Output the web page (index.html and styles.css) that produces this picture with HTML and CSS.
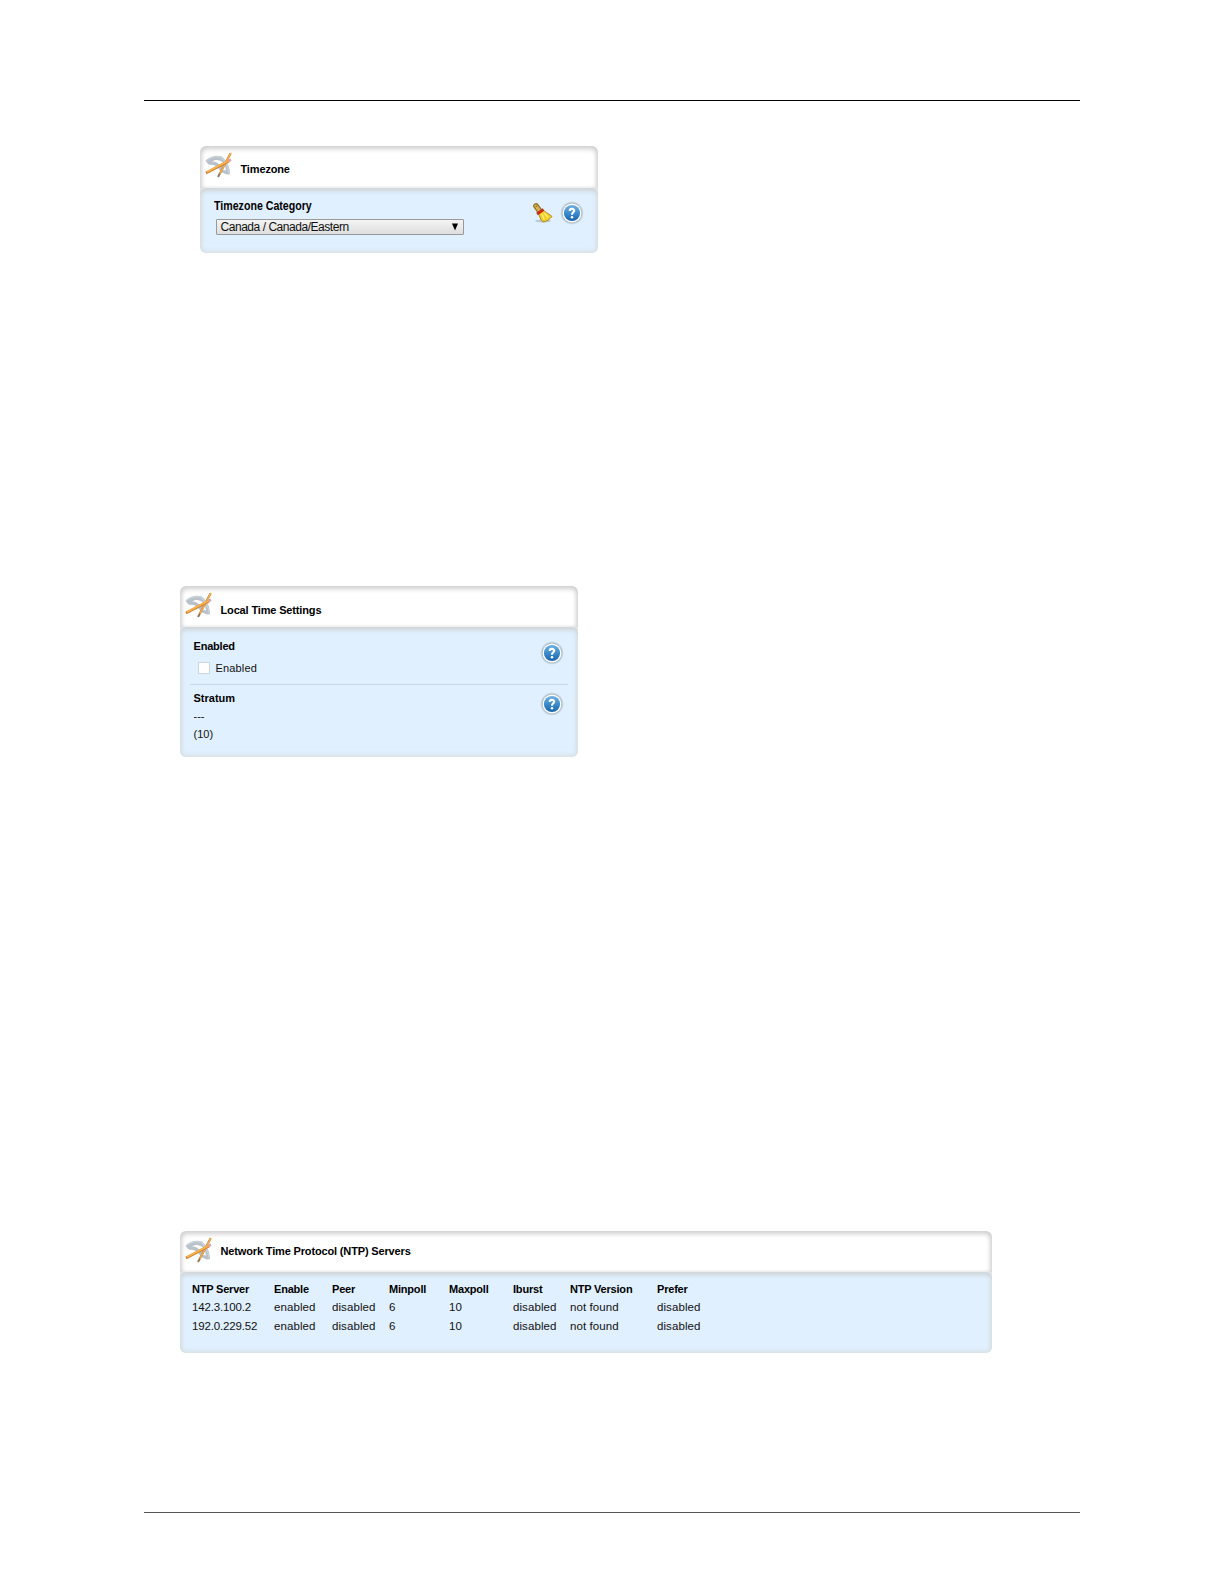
FILE: index.html
```html
<!DOCTYPE html>

<html lang="en">

	<head>

		<meta charset="utf-8">

		<title>Time Settings</title>

		<link rel="stylesheet" href="styles.css">

	</head>

	<body>

		<!-- shared icons -->
		<svg class="defs" width="0" height="0">
			<defs>
				<linearGradient id="blue" x1="0" y1="0" x2="0" y2="1">
					<stop offset="0" stop-color="#72b2e2"/>
					<stop offset="0.5" stop-color="#3d8ccb"/>
					<stop offset="1" stop-color="#1763ad"/>
				</linearGradient>
				<radialGradient id="halo">
					<stop offset="0.76" stop-color="#8d9aa6" stop-opacity="0.9"/>
					<stop offset="1" stop-color="#b5c3ce" stop-opacity="0"/>
				</radialGradient>
				<symbol id="tools" viewBox="0 0 27 27">
					<path fill-rule="evenodd" d="M0.5 8.5C5 4 12 2.500 17 4.500C22 9 25 15 25 22C22 23.500 19 21 16 20C14 16 9 12 5 13C3 12 1.500 10.500 0.500 8.500ZM7 9.500C10 9 13 11 14.500 13L18 10.500C15 7.500 10 7 7 9.500ZM17 17.500L21 18.500L20 13.500Z" fill="#b9c2cb"/>
					<path d="M1.500 8.500C6 5 12 4 16.500 5.500C21 10 23.500 15 24 21" fill="none" stroke="#ccd4db" stroke-width="1.2"/>
					<path d="M25.500 1.500L13 25" stroke="#94785a" stroke-width="2"/>
					<path d="M26 1L15 21.500" stroke="#f2ab4b" stroke-width="1.700"/>
					<path d="M24 9L1 21" stroke="#cd8237" stroke-width="2.600"/>
					<path d="M24 8.500L2 20" stroke="#fbb54c" stroke-width="1.600"/>
					<path d="M23.500 9L26 7.700" stroke="#dfa0a8" stroke-width="2.600"/>
				</symbol>
				<symbol id="help" viewBox="0 0 24 24">
					<circle cx="12" cy="12" r="12" fill="url(#halo)"/>
					<circle cx="12" cy="12" r="9.5" fill="#fff"/>
					<circle cx="12" cy="12" r="8.100" fill="url(#blue)"/>
					<path d="M9.700 10C9.700 7.200 14.300 7.300 14.200 9.700C14.200 11.300 12 11.500 12 13.700" fill="none" stroke="#fff" stroke-width="2.100"/>
					<circle cx="12" cy="16.200" r="1.250" fill="#fff"/>
				</symbol>
				<symbol id="broom" viewBox="0 0 22 22">
					<ellipse cx="11" cy="19" rx="8" ry="1.500" fill="#a9b6bd" opacity="0.700"/>
					<path d="M4 4L7 8" stroke="#8b6a22" stroke-width="5.500" stroke-linecap="round"/>
					<path d="M4 4L7 8" stroke="#d9b04f" stroke-width="3.500" stroke-linecap="round"/>
					<path d="M3.500 5L5.500 3.500" stroke="#8b6a22"/>
					<path d="M6 11L11.500 8C13 10.500 17.500 12 20 14.500C18 17 15 19.500 11 20C8 17.500 8 14 6 11Z" fill="#f3cf27" stroke="#a98224" stroke-width="0.900"/>
					<path d="M10 12L12 17.500M12.500 11L16 15.500" stroke="#fff079" stroke-width="1.300"/>
					<path d="M5 12L11.500 7.500" stroke="#c52d19" stroke-width="2.800"/>
				</symbol>
			</defs>
		</svg>

		<div class="page">

			<div class="panel timezone">
				<div class="head">
					<svg class="tools"><use href="#tools"/></svg>
					<h2>Timezone</h2>
				</div>
				<div class="content">
					<div class="field">
						<h3>Timezone Category</h3>
						<div class="select"><span>Canada / Canada/Eastern</span><svg class="arrow" viewBox="0 0 6 8"><path d="M0 0.5H6L3 7.5Z"/></svg></div>
					</div>
					<div class="actions">
						<svg class="broom"><use href="#broom"/></svg>
						<svg class="help"><use href="#help"/></svg>
					</div>
				</div>
			</div>

			<div class="panel local">
				<div class="head">
					<svg class="tools"><use href="#tools"/></svg>
					<h2>Local Time Settings</h2>
				</div>
				<div class="content">
					<div class="row enabled">
						<div>
							<h3>Enabled</h3>
							<label><span class="box"></span>Enabled</label>
						</div>
						<svg class="help"><use href="#help"/></svg>
					</div>
					<div class="row stratum">
						<div>
							<h3>Stratum</h3>
							<p>---</p>
							<p>(10)</p>
						</div>
						<svg class="help"><use href="#help"/></svg>
					</div>
				</div>
			</div>

			<div class="panel servers">
				<div class="head">
					<svg class="tools"><use href="#tools"/></svg>
					<h2>Network Time Protocol (NTP) Servers</h2>
				</div>
				<div class="content">
					<table>
						<colgroup><col class="c1"><col class="c2"><col class="c3"><col class="c4"><col class="c5"><col class="c6"><col class="c7"><col class="c8"></colgroup>
						<thead>
							<tr>
								<th>NTP Server</th>
								<th>Enable</th>
								<th>Peer</th>
								<th>Minpoll</th>
								<th>Maxpoll</th>
								<th>Iburst</th>
								<th>NTP Version</th>
								<th>Prefer</th>
							</tr>
						</thead>
						<tbody>
							<tr>
								<td class="ip">142.3.100.2</td>
								<td>enabled</td>
								<td>disabled</td>
								<td>6</td>
								<td>10</td>
								<td>disabled</td>
								<td>not found</td>
								<td>disabled</td>
							</tr>
							<tr>
								<td class="ip">192.0.229.52</td>
								<td>enabled</td>
								<td>disabled</td>
								<td>6</td>
								<td>10</td>
								<td>disabled</td>
								<td>not found</td>
								<td>disabled</td>
							</tr>
						</tbody>
					</table>
				</div>
			</div>

		</div>

	</body>

</html>
```
FILE: styles.css
```css
* {margin:0; padding:0; box-sizing:border-box;}
body {font:11px/18px "Liberation Sans",arial,sans-serif; background:#fff; color:#111;}
svg {display:block; flex:none;}
svg.defs {height:0;}
.page {width:936px; height:1413px; margin:100px 0 0 144px; padding-top:45px; border-top:1px solid #000; border-bottom:1px solid #555;}

.panel {width:398px; border-radius:6px; overflow:hidden; background:#e0e5e7;}
.head {display:flex; height:41px; padding:6px 0 0 5px; border-radius:6px 6px 0 0; background:#fff; box-shadow:inset 0 3px 5px #d0d0d0, inset 3px 0 4px -1px #ddd, inset -3px 0 4px -1px #ddd;}
.content {display:flex; border-radius:6px; background:#e0f0fe; box-shadow:inset 0 4px 4px -1px #d0d7db, inset 0 0 4px 2px #d9e0e4;}
h2, h3, th {font-size:11px; font-weight:bold; color:#000;}
h2 {margin-left:8.5px; letter-spacing:-0.15px; white-space:nowrap;}
.tools {width:27px; height:27px;}
.help {width:24px; height:24px;}

.timezone {height:107px; margin-left:56px;}
.timezone .head {height:42px;}
.timezone h2 {padding-top:8px;}
.timezone .content {height:65px; padding:9px 14px 0 14px; justify-content:space-between;}
.timezone h3 {font-size:12px; transform:scaleX(0.885); transform-origin:left; white-space:nowrap;}
.field {width:260px;}
.select {display:flex; align-items:center; justify-content:space-between; width:248px; height:16px; margin:4px 0 0 2px; padding:0 5px 0 3.5px; border:1px solid #999; border-radius:1px; background:linear-gradient(#f4f4f4,#dedede); font-size:12px; line-height:14px; letter-spacing:-0.46px;}
.arrow {width:6px; height:8px;}
.actions {display:flex; gap:6px; padding-top:4px;}
.broom {width:22px; height:22px; margin-top:1px;}

.local {height:171px; margin:333px 0 0 36px;}
.local h2 {padding-top:9px;}
.local .content {display:block; height:130px; padding:10px 10px 0 10px;}
.row {display:flex; justify-content:space-between; padding:0 4px 0 3.5px;}
.enabled {height:48px; border-bottom:1px solid #c8d9e3;}
.enabled .help {margin-top:4px;}
.enabled h3 {letter-spacing:-0.2px;}
label {display:flex; align-items:center; height:22px; margin:2px 0 0 4px; gap:6px; letter-spacing:0.15px;}
.box {width:12px; height:12px; border:1px solid #ccd7dc; background:#fff;}
.stratum {padding-top:4px;}
.stratum .help {margin-top:3px;}

.servers {width:812px; height:122px; margin:474px 0 0 36px;}
.servers h2 {padding-top:5px;}
.servers .content {height:81px; padding:8px 0 0 12px; align-items:flex-start;}
table {width:560px; border-collapse:collapse; table-layout:fixed;}
th, td {height:18px; text-align:left; white-space:nowrap;}
th {letter-spacing:-0.2px;}
td {font-size:11.5px; letter-spacing:0.08px;}
td.ip {letter-spacing:-0.17px;}
tbody tr + tr td {padding-top:1px;}
.c1 {width:82px;}
.c2 {width:58px;}
.c3 {width:57px;}
.c4 {width:60px;}
.c5 {width:64px;}
.c6 {width:57px;}
.c7 {width:87px;}
.c8 {width:95px;}
```
